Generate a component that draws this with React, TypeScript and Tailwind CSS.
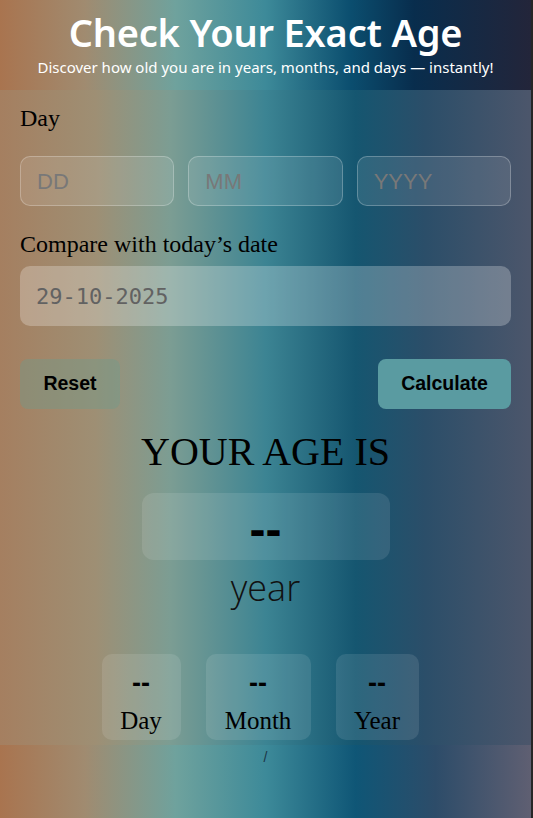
import React from "react";

export default function App() {
  const serif = { fontFamily: '"Liberation Serif", "Times New Roman", serif' };
  return (
    <div className="min-h-[818px] w-full flex bg-[#262626]">
      <div className="w-[531px] shrink-0 flex flex-col bg-[linear-gradient(to_right,#a9744f_0%,#a08b70_16%,#6fa29d_33%,#3d8a99_50%,#0f5676_67%,#2d4c69_82%,#5f5f72_100%)]">
        <header className="h-[90px] flex flex-col items-center bg-[linear-gradient(to_right,#a9744f_0%,#a08b70_16%,#6fa29d_33%,#3d8a99_50%,#0b4e6f_66%,#082d4d_78%,#23253a_100%)] text-white [font-family:'Noto_Sans',sans-serif]">
          <h1 className="text-[38px] font-semibold leading-[46px] mt-[9px] tracking-[-0.2px]">Check Your Exact Age</h1>
          <p className="text-[15px] leading-[20px] mt-[2px]">Discover how old you are in years, months, and days — instantly!</p>
        </header>

        <main className="flex flex-col px-5 pt-[14px] pb-[5px] bg-[linear-gradient(to_right,#a57f60_0%,#9e8f74_18%,#7c9d93_32%,#3c8493_50%,#155670_67%,#2b4e69_80%,#4c566b_100%)]">
          <label className="text-[24px] leading-[28px] text-black" style={serif}>Day</label>
          <div className="grid grid-cols-3 gap-[14px] mt-[24px]">
            {["DD", "MM", "YYYY"].map((p) => (
              <div
                key={p}
                className="h-[50px] rounded-[10px] border border-white/25 bg-white/10 flex items-center px-4 text-[22px] text-[#787878] [font-family:'Liberation_Sans',Arial,sans-serif]"
              >
                {p}
              </div>
            ))}
          </div>
          <label className="text-[24px] leading-[28px] text-black mt-[24px]" style={serif}>Compare with today’s date</label>
          <div className="mt-[8px] h-[60px] rounded-[10px] bg-white/25 flex items-center px-4 text-[22px] text-[#626262] [font-family:'DejaVu_Sans_Mono',monospace]">
            29-10-2025
          </div>
          <div className="flex justify-between mt-[33px] [font-family:'Liberation_Sans',Arial,sans-serif]">
            <button className="h-[50px] w-[100px] rounded-[8px] bg-[#6e9c8c]/40 text-[19.5px] font-bold text-black">Reset</button>
            <button className="h-[50px] w-[133px] rounded-[8px] bg-[#5a9ba1] text-[19.5px] font-bold text-black">Calculate</button>
          </div>
          <h2 className="text-[40px] leading-[46px] text-black text-center mt-[20px]" style={serif}>YOUR AGE IS</h2>
          <div className="self-center mt-[18px] w-[248px] h-[67px] rounded-[12px] bg-white/10 flex items-center justify-center text-[48px] font-bold text-black [font-family:'Liberation_Sans',Arial,sans-serif] pt-[6px]">
            --
          </div>
          <div className="text-center text-[36px] leading-[44px] font-light text-[#111] mt-[6px] [font-family:'Open_Sans',sans-serif]">year</div>
          <div className="flex justify-center gap-[25px] mt-[44px] pr-[11px]">
            {[
              ["Day", "w-[79px]"],
              ["Month", "w-[105px]"],
              ["Year", "w-[83px]"],
            ].map(([l, w]) => (
              <div key={l} className={`${w} h-[86px] rounded-[10px] bg-white/10 flex flex-col items-center pt-[14px]`}>
                <div className="text-[27px] leading-[30px] font-bold text-black [font-family:'Liberation_Sans',Arial,sans-serif]">--</div>
                <div className="text-[25px] leading-[30px] text-black mt-[8px]" style={serif}>{l}</div>
              </div>
            ))}
          </div>
        </main>
        <footer className="text-center text-[14px] leading-[18px] text-[#1b3546] pt-[3px] [font-family:'Liberation_Sans',Arial,sans-serif]">/</footer>
      </div>
    </div>
  );
}
